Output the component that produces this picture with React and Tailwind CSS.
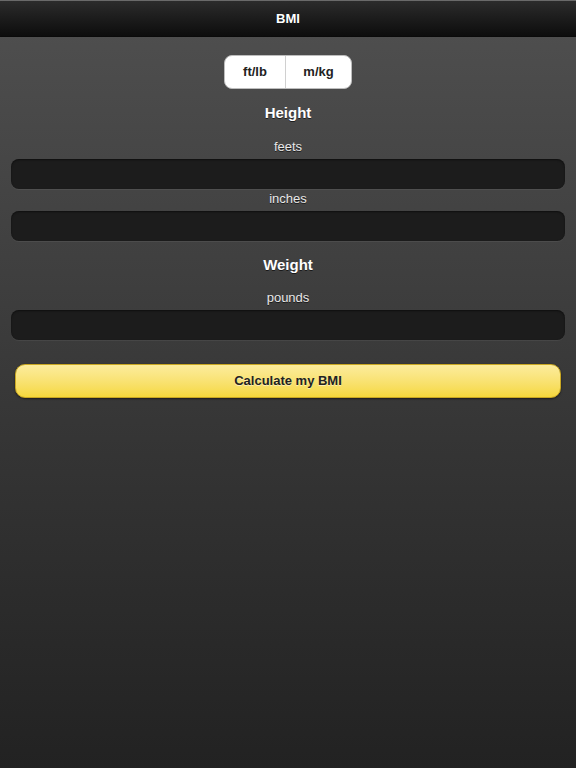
export default function App() {
    const field = 'mx-[11px] h-[30px] rounded-lg bg-[#1c1c1c] shadow-[inset_0_1px_2px_rgba(0,0,0,0.5),0_1px_0_rgba(255,255,255,0.06)]';
    const label = 'text-center text-[13px] leading-4 text-[#e8e8e8] [text-shadow:0_1px_0_rgba(0,0,0,0.6)]';
    const title = 'text-center text-[15px] font-bold leading-5 text-white [text-shadow:0_1px_0_rgba(0,0,0,0.6)]';

    return (
        <div className="min-h-[768px] bg-gradient-to-b from-[#505050] to-[#222222] font-['Liberation_Sans',Arial,sans-serif]">
            <div className="flex h-[37px] items-center justify-center border-t border-t-[#6a6a6a] border-b border-b-[#0a0a0a] bg-gradient-to-b from-[#2c2c2c] to-[#0d0d0d]">
                <span className="text-[13px] font-bold text-white">BMI</span>
            </div>

            <div className="mt-[18px] flex justify-center">
                <div className="flex h-[34px] overflow-hidden rounded-lg border border-[#bdbdbd] bg-white">
                    <button className="w-[60px] text-[13px] font-bold text-[#222]">ft/lb</button>
                    <div className="w-px bg-[#d0d0d0]" />
                    <button className="w-[65px] text-[13px] font-bold text-[#222]">m/kg</button>
                </div>
            </div>

            <div className={`${title} mt-[14px]`}>Height</div>
            <div className={`${label} mt-[16px]`}>feets</div>
            <div className={`${field} mt-[4px]`} />
            <div className={`${label} mt-[2px]`}>inches</div>
            <div className={`${field} mt-[4px]`} />

            <div className={`${title} mt-[14px]`}>Weight</div>
            <div className={`${label} mt-[15px]`}>pounds</div>
            <div className={`${field} mt-[4px]`} />

            <div className="mx-[15px] mt-[24px] flex h-[34px] items-center justify-center rounded-[10px] border border-[#c9a722] bg-gradient-to-b from-[#fcec9c] to-[#f6d83a] shadow-[0_1px_2px_rgba(0,0,0,0.5)]">
                <span className="text-[13px] font-bold text-[#222] [text-shadow:0_1px_0_rgba(255,255,255,0.5)]">Calculate my BMI</span>
            </div>
        </div>
    );
}
